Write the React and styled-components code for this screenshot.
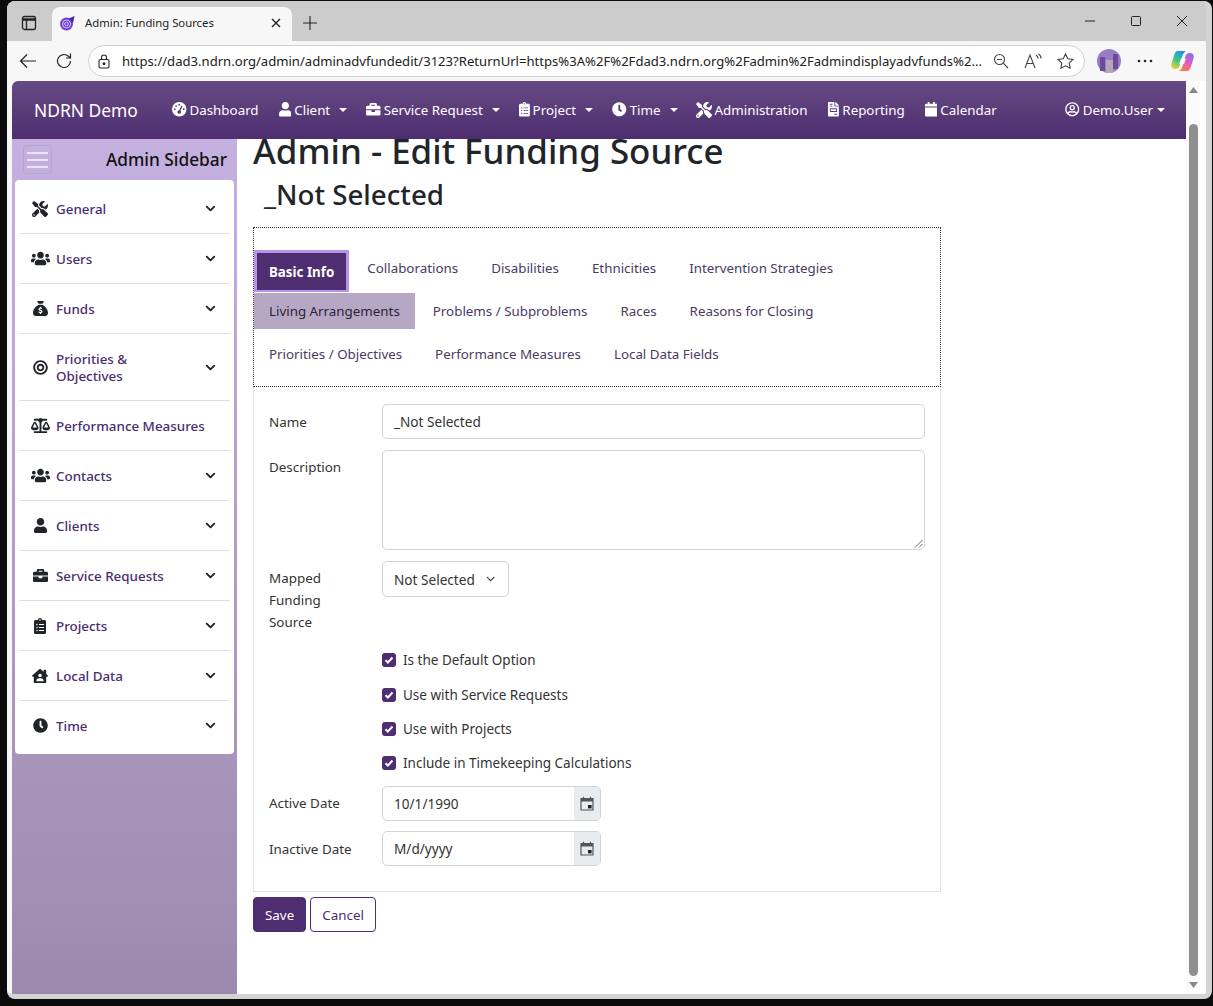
import React from 'react';
import styled, { createGlobalStyle } from 'styled-components';
import {
  FaTools, FaUsers, FaBullseye, FaBalanceScale, FaUser, FaBriefcase, FaClipboardList,
  FaHouseUser, FaClock, FaCalendar, FaRegUserCircle, FaFileInvoice
} from 'react-icons/fa';
import { FaSackDollar, FaGaugeHigh } from 'react-icons/fa6';
import { FiChevronDown } from 'react-icons/fi';

const GlobalStyle = createGlobalStyle`
  html, body { margin: 0; padding: 0; background: #000; }
  body { font-family: "Noto Sans", "Open Sans", "Liberation Sans", sans-serif; }
  * { box-sizing: border-box; }
`;

const Desktop = styled.div`
  width: 1213px;
  height: 1006px;
  padding: 1px 1px 7px 7px;
  background: #0b0b0b;
  overflow: hidden;
`;

const Window = styled.div`
  height: 100%;
  display: flex;
  flex-direction: column;
  background: #f7f7f7;
  border-radius: 8px;
  border-right: 6px solid #d4d4d4;
  border-bottom: 5px solid #d4d4d4;
  overflow: hidden;
`;

const TabStrip = styled.div`
  height: 40px;
  flex: none;
  display: flex;
  align-items: flex-end;
  background: #cccccc;
  padding-left: 7px;
`;

const StripButton = styled.div`
  width: 30px;
  height: 34px;
  padding-bottom: 2px;
  display: flex;
  align-items: center;
  justify-content: center;
`;

const Tab = styled.div`
  width: 240px;
  height: 34px;
  margin-left: 8px;
  display: flex;
  align-items: center;
  padding: 0 11px 3px 7px;
  background: #f7f7f7;
  border-radius: 8px 8px 0 0;
  font-size: 11.3px;
  color: #222;
  gap: 10px;
`;

const TabTitle = styled.span`
  flex: 1;
`;

const NewTab = styled(StripButton)`
  margin-left: 3px;
`;

const WindowControls = styled.div`
  margin-left: auto;
  height: 40px;
  display: flex;
  align-items: center;
  padding-right: 1px;
`;

const WindowControl = styled.div`
  width: 46px;
  height: 40px;
  display: flex;
  align-items: center;
  justify-content: center;
`;

const AddressRow = styled.div`
  height: 40px;
  flex: none;
  display: flex;
  align-items: center;
  padding: 0 3px 0 3px;
  background: #f7f7f7;
`;

const BarIcon = styled.div`
  width: 36px;
  height: 32px;
  margin-left: ${props => props.$gap || 0}px;
  display: flex;
  align-items: center;
  justify-content: center;
`;

const AddressBox = styled.div`
  width: 997px;
  height: 32px;
  margin-left: 6px;
  display: flex;
  align-items: center;
  padding: 0 3px 0 8px;
  background: #fff;
  border: 1px solid #d0d0d0;
  border-radius: 16px;
  font-size: 13.1px;
  color: #222;
`;

const Url = styled.span`
  margin-left: 11px;
  flex: 1;
  white-space: nowrap;
  overflow: hidden;
`;

const AddressIcon = styled.span`
  width: 32px;
  display: flex;
  justify-content: center;
`;

const Viewport = styled.div`
  flex: 1;
  min-height: 0;
  display: flex;
  margin-left: 5px;
  background: #fff;
`;

const Page = styled.div`
  width: 1174px;
  display: flex;
  flex-direction: column;
`;

const Navbar = styled.nav`
  position: relative;
  z-index: 2;
  height: 58px;
  flex: none;
  display: flex;
  align-items: center;
  padding: 0 21px 1px 22px;
  color: #fff;
  background: linear-gradient(180deg, #664a83 0%, #4e2d70 100%);
  border-radius: 6px 0 0 0;
  font-size: 13.35px;
`;

const Brand = styled.span`
  width: 138px;
  font-size: 17.4px;
`;

const NavItem = styled.span`
  display: flex;
  align-items: center;
  gap: 3px;
  margin-right: ${props => props.$gap ?? 20}px;
  white-space: nowrap;
  svg {
    flex: none;
    width: ${props => props.$w || 14.5}px;
    height: ${props => props.$w > 14.5 ? props.$w : 14.5}px;
  }
`;

const Caret = styled.i`
  width: 0;
  height: 0;
  margin-left: 6px;
  border-top: 4.5px solid #fff;
  border-left: 4px solid transparent;
  border-right: 4px solid transparent;
`;

const UserItem = styled(NavItem)`
  margin: 0 0 0 auto;
  ${Caret} { margin-left: 1px; }
`;

const Body = styled.div`
  flex: 1;
  min-height: 0;
  display: flex;
`;

const Sidebar = styled.aside`
  width: 225px;
  flex: none;
  padding: 0 3px;
  background: linear-gradient(180deg, #c5b1e0 0%, #9c8aae 100%);
`;

const SidebarHead = styled.div`
  height: 41px;
  display: flex;
  align-items: center;
  justify-content: space-between;
  padding: 0 7px 0 8px;
`;

const Burger = styled.div`
  width: 29px;
  height: 29px;
  display: flex;
  flex-direction: column;
  justify-content: center;
  gap: 5px;
  padding: 0 3px;
  border: 1px solid #b8a4d4;
  border-radius: 4px;
  span { height: 2px; background: #ece4f6; }
`;

const SidebarTitle = styled.span`
  font-size: 17.3px;
  font-weight: 500;
  color: #111;
`;

const SideCard = styled.div`
  padding: 4px;
  background: #fff;
  border-radius: 4px;
`;

const SideRow = styled.div`
  min-height: ${props => props.$tall ? 67 : props.$last ? 49 : 50}px;
  display: flex;
  align-items: center;
  padding: 0 12px 0 13px;
  border-bottom: ${props => props.$last ? 'none' : '1px solid #dfdfe6'};
  color: #4b2d70;
  font-size: 13.4px;
  font-weight: 500;
  line-height: 17px;
`;

const SideIcon = styled.span`
  width: 16px;
  margin-right: 8px;
  display: flex;
  justify-content: center;
  color: #212529;
  font-size: ${props => props.$size || 15}px;
  svg { flex: none; }
`;

const SideLabel = styled.span`
  flex: 1;
  margin-top: 2px;
`;

const Chevron = styled(FiChevronDown)`
  color: #222;
  font-size: 15px;
  stroke-width: 3;
`;

const Main = styled.main`
  flex: 1;
  padding: 0 0 0 16px;
  color: #212529;
`;

const Title = styled.h1`
  margin: -12px 0 0;
  font-size: 34.9px;
  line-height: 48px;
  font-weight: 500;
`;

const SubTitle = styled.h2`
  margin: 1px 0 15px 11px;
  font-size: 27.7px;
  line-height: 36px;
  font-weight: 500;
`;

const TabBox = styled.div`
  width: 688px;
  height: 160px;
  padding: 22px 0 0 0;
  border: 1px dotted #333;
`;

const TabLine = styled.div`
  height: 43px;
  display: flex;
  align-items: flex-start;
`;

const PageTab = styled.div`
  height: 36px;
  display: flex;
  align-items: center;
  padding: 0 15px;
  margin-right: 3px;
  font-size: 13.35px;
  color: #4b3a63;
  white-space: nowrap;
  ${props => props.$active && `
    height: 42px;
    background: #4e2d70;
    border: 3px solid #b794e8;
    border-bottom-width: 2px;
    color: #fff;
    font-weight: 700;
    padding: 0 12px;
  `}
  ${props => props.$hover && `
    background: #b6a8c4;
    color: #2b2438;
  `}
`;

const FormCard = styled.div`
  width: 688px;
  height: 505px;
  padding: 17px 15px 0;
  border: 1px solid #e2e2e2;
  border-top: none;
`;

const FieldRow = styled.div`
  display: flex;
  margin-bottom: ${props => props.$mb ?? 11}px;
`;

const Label = styled.div`
  width: 113px;
  flex: none;
  padding-top: ${props => props.$top ?? 6.5}px;
  font-size: 13.4px;
  line-height: 22px;
  color: #333;
`;

const Input = styled.div`
  width: 543px;
  height: 35px;
  display: flex;
  align-items: center;
  padding: 0 11px;
  border: 1px solid #ced4da;
  border-radius: 5px;
  font-size: 13.6px;
  color: #333;
`;

const TextArea = styled(Input)`
  position: relative;
  height: 100px;
`;

const Grip = styled.svg`
  position: absolute;
  right: 1px;
  bottom: 1px;
`;

const Select = styled(Input)`
  width: 127px;
  height: 36px;
  gap: 9px;
  white-space: nowrap;
`;

const CheckList = styled.div`
  margin-bottom: 5px;
`;

const CheckRow = styled.div`
  margin-left: 113px;
  height: 34.4px;
  display: flex;
  align-items: center;
  gap: 7px;
  font-size: 13.5px;
  color: #333;
`;

const Check = styled.span`
  width: 14px;
  height: 14px;
  display: flex;
  align-items: center;
  justify-content: center;
  background: #4e2d70;
  border-radius: 3px;
`;

const DateGroup = styled.div`
  width: 219px;
  height: 35px;
  display: flex;
  border: 1px solid #ced4da;
  border-radius: 5px;
  overflow: hidden;
  font-size: 13.6px;
  color: #333;
`;

const DateValue = styled.div`
  flex: 1;
  padding: 0 11px;
  display: flex;
  align-items: center;
`;

const DateAddon = styled.div`
  width: 26px;
  display: flex;
  align-items: center;
  justify-content: center;
  background: #e9ecef;
`;

const Buttons = styled.div`
  margin-top: 5px;
  display: flex;
  gap: 4px;
`;

const Button = styled.div`
  height: 35px;
  display: flex;
  align-items: center;
  padding: 0 11px;
  border: 1px solid #4e2d70;
  border-radius: 4px;
  font-size: 13.4px;
  background: ${props => props.$primary ? '#4e2d70' : '#fff'};
  color: ${props => props.$primary ? '#fff' : '#4e2d70'};
`;

const Scrollbar = styled.div`
  width: 14px;
  flex: none;
  display: flex;
  flex-direction: column;
  align-items: center;
  padding: 6px 0 6px;
  background: #fbfbfb;
`;

const ScrollThumb = styled.div`
  flex: 1;
  width: 9px;
  margin: 31px 0 6px;
  background: #8f8f8f;
  border-radius: 5px;
`;

const sideItems = [
  { icon: <FaTools />, size: 16, label: 'General', more: true },
  { icon: <FaUsers />, size: 19, label: 'Users', more: true },
  { icon: <FaSackDollar />, label: 'Funds', more: true },
  { icon: <FaBullseye />, label: <>Priorities &amp;<br />Objectives</>, more: true, tall: true },
  { icon: <FaBalanceScale />, size: 19, label: 'Performance Measures' },
  { icon: <FaUsers />, size: 19, label: 'Contacts', more: true },
  { icon: <FaUser />, label: 'Clients', more: true },
  { icon: <FaBriefcase />, label: 'Service Requests', more: true },
  { icon: <FaClipboardList />, size: 16, label: 'Projects', more: true },
  { icon: <FaHouseUser />, size: 16, label: 'Local Data', more: true },
  { icon: <FaClock />, label: 'Time', more: true, last: true }
];

const tabRows = [
  ['Basic Info', 'Collaborations', 'Disabilities', 'Ethnicities', 'Intervention Strategies'],
  ['Living Arrangements', 'Problems / Subproblems', 'Races', 'Reasons for Closing'],
  ['Priorities / Objectives', 'Performance Measures', 'Local Data Fields']
];

const checks = ['Is the Default Option', 'Use with Service Requests', 'Use with Projects', 'Include in Timekeeping Calculations'];

const CalendarIcon = () => (
  <svg width="14" height="15" viewBox="0 0 14 15">
    <path d="M1 2.5h12v11.5H1z" fill="none" stroke="#555" strokeWidth="1.2" />
    <path d="M1 3h12v2.4H1z" fill="#555" />
    <path d="M3.5 0.8v2M10.5 0.8v2" stroke="#555" strokeWidth="1.2" />
    <rect x="8" y="9" width="3.6" height="3.4" fill="#222" />
  </svg>
);

const App = () => (
  <>
    <GlobalStyle />
    <Desktop>
      <Window>
        <TabStrip>
          <StripButton>
            <svg width="16" height="16" viewBox="0 0 16 16" fill="none" stroke="#222" strokeWidth="1.3">
              <rect x="1.5" y="1.5" width="13" height="13" rx="2" />
              <path d="M1.5 4.5h13" strokeWidth="2.4" />
              <path d="M5.5 4.5v10" />
            </svg>
          </StripButton>
          <Tab>
            <svg width="16" height="16" viewBox="0 0 16 16">
              <circle cx="7.5" cy="9" r="6.5" fill="#6d3fd6" />
              <path d="M10 3.5 L15.5 1 L14 8z" fill="#4a1fb0" />
              <circle cx="7.5" cy="9" r="4" fill="none" stroke="#d9c8fa" strokeWidth="1" />
              <circle cx="7.5" cy="9" r="1.8" fill="none" stroke="#d9c8fa" strokeWidth="1" />
            </svg>
            <TabTitle>Admin: Funding Sources</TabTitle>
            <svg width="10" height="10" viewBox="0 0 10 10" stroke="#222" strokeWidth="1.4">
              <path d="M1 1l8 8M9 1l-8 8" />
            </svg>
          </Tab>
          <NewTab>
            <svg width="14" height="14" viewBox="0 0 14 14" stroke="#222" strokeWidth="1.1">
              <path d="M7 0v14M0 7h14" />
            </svg>
          </NewTab>
          <WindowControls>
            <WindowControl>
              <svg width="10" height="10" viewBox="0 0 10 10" stroke="#222"><path d="M0 5h10" /></svg>
            </WindowControl>
            <WindowControl>
              <svg width="10" height="10" viewBox="0 0 10 10" fill="none" stroke="#222">
                <rect x="0.5" y="0.5" width="9" height="9" rx="1" />
              </svg>
            </WindowControl>
            <WindowControl>
              <svg width="10" height="10" viewBox="0 0 10 10" stroke="#222"><path d="M0 0l10 10M10 0L0 10" /></svg>
            </WindowControl>
          </WindowControls>
        </TabStrip>
        <AddressRow>
          <BarIcon>
            <svg width="18" height="16" viewBox="0 0 18 16" fill="none" stroke="#222" strokeWidth="1.2">
              <path d="M17 8H1.5M8 1.5L1.5 8L8 14.5" />
            </svg>
          </BarIcon>
          <BarIcon>
            <svg width="18" height="18" viewBox="0 0 18 18" fill="none" stroke="#222" strokeWidth="1.2">
              <path d="M15.5 9a6.5 6.5 0 1 1-2-4.7L15.5 6" />
              <path d="M15.5 1.5V6H11" />
            </svg>
          </BarIcon>
          <AddressBox>
            <svg width="14" height="15" viewBox="0 0 14 15" fill="none" stroke="#222" strokeWidth="1.1">
              <rect x="2" y="5.5" width="10" height="8.5" rx="1.5" />
              <path d="M4.5 5.5V3.5a2.5 2.5 0 0 1 5 0v2" />
              <circle cx="7" cy="9.8" r="0.9" fill="#222" />
            </svg>
            <Url>https://dad3.ndrn.org/admin/adminadvfundedit/3123?ReturnUrl=https%3A%2F%2Fdad3.ndrn.org%2Fadmin%2Fadmindisplayadvfunds%2...</Url>
            <AddressIcon>
              <svg width="16" height="16" viewBox="0 0 16 16" fill="none" stroke="#444" strokeWidth="1.1">
                <circle cx="6.5" cy="6.5" r="5" />
                <path d="M10.2 10.2L15 15M4 6.5h5" />
              </svg>
            </AddressIcon>
            <AddressIcon>
              <svg width="18" height="16" viewBox="0 0 18 16" fill="none" stroke="#444" strokeWidth="1.1">
                <path d="M1 15L6 2l5 13M3 10.5h6" />
                <path d="M12 2c1.4 1 2 2.2 2 3.5M14.5 0.8c1.7 1.3 2.5 3 2.5 4.7" />
              </svg>
            </AddressIcon>
            <AddressIcon>
              <svg width="17" height="16" viewBox="0 0 17 16" fill="none" stroke="#444" strokeWidth="1.1">
                <path d="M8.5 1l2.3 4.7 5.2.8-3.8 3.6.9 5.1-4.6-2.4-4.6 2.4.9-5.1L1 6.5l5.2-.8z" />
              </svg>
            </AddressIcon>
          </AddressBox>
          <BarIcon $gap={6}>
            <svg width="24" height="24" viewBox="0 0 24 24">
              <circle cx="12" cy="12" r="12" fill="#9a7cc4" />
              <path d="M3 8h5v14H3zM16 5h5v15h-5z" fill="#6d4a9a" />
              <rect x="9" y="11" width="7" height="13" fill="#b8a6b8" />
            </svg>
          </BarIcon>
          <BarIcon>
            <svg width="16" height="4" viewBox="0 0 16 4" fill="#222">
              <circle cx="2" cy="2" r="1.3" /><circle cx="8" cy="2" r="1.3" /><circle cx="14" cy="2" r="1.3" />
            </svg>
          </BarIcon>
          <BarIcon $gap={1}>
            <svg width="23" height="22" viewBox="0 0 23 22">
              <defs>
                <linearGradient id="cpA" x1="0.7" y1="0" x2="0.2" y2="1">
                  <stop offset="0" stopColor="#1f8fe8" /><stop offset="0.5" stopColor="#35c98a" /><stop offset="1" stopColor="#f5d02e" />
                </linearGradient>
                <linearGradient id="cpB" x1="0.8" y1="0" x2="0.3" y2="1">
                  <stop offset="0" stopColor="#8a6cf0" /><stop offset="0.55" stopColor="#e55cc0" /><stop offset="1" stopColor="#f5843c" />
                </linearGradient>
              </defs>
              <path d="M7 1h8c-2 1-3 3-3.6 5L8.5 16c-.6 2-2 3-4 3H4c-3 0-4.4-2.5-3.5-5.5L3 5.5C3.8 3 5 1 7 1z" fill="url(#cpA)" />
              <path d="M16 21H8c2-1 3-3 3.6-5l2.9-10c.6-2 2-3 4-3h.5c3 0 4.4 2.5 3.5 5.5L20 16.5c-.8 2.5-2 4.5-4 4.5z" fill="url(#cpB)" />
              <path d="M10 8.5h4.800L13 14H8.200z" fill="#fff" />
            </svg>
          </BarIcon>
        </AddressRow>
        <Viewport>
          <Page>
            <Navbar>
              <Brand>NDRN Demo</Brand>
              <NavItem><FaGaugeHigh />Dashboard</NavItem>
              <NavItem $w={12.7} $gap={19}><FaUser />Client<Caret /></NavItem>
              <NavItem $gap={19}><FaBriefcase />Service Request<Caret /></NavItem>
              <NavItem $w={10.9} $gap={19}><FaClipboardList />Project<Caret /></NavItem>
              <NavItem $gap={18}><FaClock />Time<Caret /></NavItem>
              <NavItem $w={16} $gap={21}><FaTools />Administration</NavItem>
              <NavItem $w={10.9}><FaFileInvoice />Reporting</NavItem>
              <NavItem $w={12.7}><FaCalendar />Calendar</NavItem>
              <UserItem><FaRegUserCircle />Demo.User<Caret /></UserItem>
            </Navbar>
            <Body>
              <Sidebar>
                <SidebarHead>
                  <Burger><span /><span /><span /></Burger>
                  <SidebarTitle>Admin Sidebar</SidebarTitle>
                </SidebarHead>
                <SideCard>
                  {sideItems.map((item, i) => (
                    <SideRow key={i} $tall={item.tall} $last={item.last}>
                      <SideIcon $size={item.size}>{item.icon}</SideIcon>
                      <SideLabel>{item.label}</SideLabel>
                      {item.more && <Chevron />}
                    </SideRow>
                  ))}
                </SideCard>
              </Sidebar>
              <Main>
                <Title>Admin - Edit Funding Source</Title>
                <SubTitle>_Not Selected</SubTitle>
                <TabBox>
                  {tabRows.map((row, r) => (
                    <TabLine key={r}>
                      {row.map((t) => (
                        <PageTab key={t} $active={t === 'Basic Info'} $hover={t === 'Living Arrangements'}>{t}</PageTab>
                      ))}
                    </TabLine>
                  ))}
                </TabBox>
                <FormCard>
                  <FieldRow>
                    <Label>Name</Label>
                    <Input>_Not Selected</Input>
                  </FieldRow>
                  <FieldRow>
                    <Label $top={6}>Description</Label>
                    <TextArea>
                      <Grip width="9" height="9" viewBox="0 0 9 9" stroke="#666">
                        <path d="M8.5 1L1 8.5M8.5 5L5 8.5" />
                      </Grip>
                    </TextArea>
                  </FieldRow>
                  <FieldRow $mb={10}>
                    <Label $top={6}>Mapped<br />Funding<br />Source</Label>
                    <Select>Not Selected <FiChevronDown size={14} /></Select>
                  </FieldRow>
                  <CheckList>
                    {checks.map((c) => (
                      <CheckRow key={c}>
                        <Check>
                          <svg width="10" height="10" viewBox="0 0 10 10" fill="none" stroke="#fff" strokeWidth="2">
                            <path d="M1.5 5.2l2.4 2.3 4.6-5" />
                          </svg>
                        </Check>
                        {c}
                      </CheckRow>
                    ))}
                  </CheckList>
                  <FieldRow $mb={10}>
                    <Label>Active Date</Label>
                    <DateGroup>
                      <DateValue>10/1/1990</DateValue>
                      <DateAddon><CalendarIcon /></DateAddon>
                    </DateGroup>
                  </FieldRow>
                  <FieldRow>
                    <Label $top={7}>Inactive Date</Label>
                    <DateGroup>
                      <DateValue>M/d/yyyy</DateValue>
                      <DateAddon><CalendarIcon /></DateAddon>
                    </DateGroup>
                  </FieldRow>
                </FormCard>
                <Buttons>
                  <Button $primary>Save</Button>
                  <Button>Cancel</Button>
                </Buttons>
              </Main>
            </Body>
          </Page>
          <Scrollbar>
            <svg width="9" height="6" viewBox="0 0 9 6" fill="#888"><path d="M4.5 0L9 6H0z" /></svg>
            <ScrollThumb />
            <svg width="9" height="6" viewBox="0 0 9 6" fill="#888"><path d="M4.5 6L9 0H0z" /></svg>
          </Scrollbar>
        </Viewport>
      </Window>
    </Desktop>
  </>
);

export default App;
